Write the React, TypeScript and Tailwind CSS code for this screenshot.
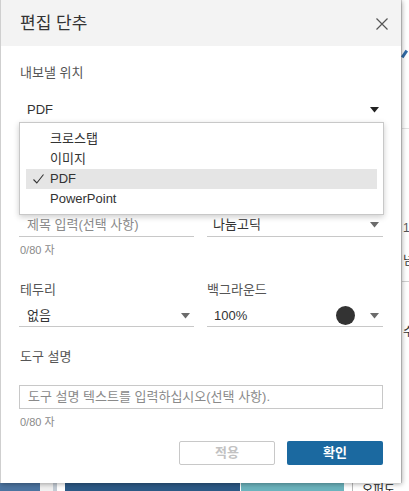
import { FC } from 'react'

const font = { fontFamily: '"Liberation Sans", "Noto Sans CJK KR", sans-serif' }

const Caret: FC<{ dark?: boolean }> = ({ dark }) => (
  <svg width="9" height="6" viewBox="0 0 9 6" className="shrink-0">
    <path d="M0 0 H9 L4.5 5.5 Z" fill={dark ? '#222' : '#6b6b6b'} />
  </svg>
)

const Counter = () => (
  <div className="h-[14px] pl-px text-[11px] leading-[14px] text-[#8a8a8a]">0/80 자</div>
)

const App: FC = () => {
  return (
    <div className="relative h-[491px] w-[409px] overflow-hidden bg-white text-[#333]" style={font}>
      {/* page behind the dialog */}
      <div className="flex h-full w-full flex-col">
        <div className="flex flex-1">
          <div className="flex-1" />
          <div className="relative w-[8px] border-l border-[#d6d6d6] bg-white text-[12px]">
            <div className="mt-[50px] ml-[1px] h-[8px] w-[3px] rotate-[35deg] bg-[#2f6aa6]" />
            <div className="mt-[70px] h-px w-full bg-[#e2e2e2]" />
            <div className="mt-[92px] pl-[1px] leading-[14px] text-[#555]">1</div>
            <div className="mt-[18px] pl-[1px] leading-[16px]">넘</div>
            <div className="mt-[12px] h-px w-full bg-[#d0d0d0]" />
            <div className="mt-[42px] pl-[1px] leading-[16px] text-[#333]">수</div>
          </div>
        </div>
        <div className="flex h-[8px] items-stretch bg-white">
          <div className="w-[40px] bg-[#4c74a0]" />
          <div className="w-[13px] bg-[#f0f0f0]" />
          <div className="w-[4px] bg-[#c3cbd4]" />
          <div className="w-[8px]" />
          <div className="w-[175px] bg-[#2c5985]" />
          <div className="w-px" />
          <div className="w-[103px] bg-[#6bb3bd]" />
          <div className="w-[8px]" />
          <div className="w-px bg-[#b8b8b8]" />
          <div className="pl-[9px] text-[12px] leading-[14px] text-[#222]">오퍼도</div>
        </div>
      </div>

      {/* dialog */}
      <div className="absolute left-0 top-0 h-[483px] w-[401px] border-l border-[#cfcfcf] bg-white shadow-[1px_1px_5px_rgba(0,0,0,0.35)]">
        <div className="flex h-[46px] items-center justify-between bg-[#f3f3f3] pl-[19px] pr-[13px] pt-[2px]">
          <span className="text-[17px] leading-[20px] text-[#333]">편집 단추</span>
          <svg width="12" height="12" viewBox="0 0 12 12">
            <path d="M0.5 0.5 L11.5 11.5 M11.5 0.5 L0.5 11.5" stroke="#555" strokeWidth="1.2" />
          </svg>
        </div>

        <div className="flex flex-col px-[18px] pt-[18px] text-[13px]">
          <div className="h-[18px] pl-px leading-[18px] text-[#555]">내보낼 위치</div>

          <div className="mt-[15px] flex h-[26px] items-center justify-between border-b border-[#c8c8c8] pl-[8px] pr-[4px]">
            <span className="leading-[18px] text-[#333]">PDF</span>
            <Caret dark />
          </div>

          <div className="mt-[90px] grid grid-cols-[175px_176px] gap-x-[13px]">
            <div className="flex h-[24px] items-center border-b border-[#c8c8c8] pl-[8px]">
              <span className="text-[#8a8a8a]">제목 입력(선택 사항)</span>
            </div>
            <div className="flex h-[24px] items-center justify-between border-b border-[#c8c8c8] pl-[6px] pr-[4px]">
              <span className="text-[#333]">나눔고딕</span>
              <Caret />
            </div>
          </div>

          <div className="mt-[6px]">
            <Counter />
          </div>

          <div className="mt-[24px] grid grid-cols-[175px_176px] gap-x-[13px]">
            <div className="h-[18px] pl-px leading-[18px] text-[#555]">테두리</div>
            <div className="h-[18px] leading-[18px] text-[#555]">백그라운드</div>
            <div className="mt-[6px] flex h-[22px] items-center justify-between border-b border-[#c8c8c8] pl-[8px] pr-[4px]">
              <span className="text-[#333]">없음</span>
              <Caret />
            </div>
            <div className="mt-[6px] flex h-[22px] items-center border-b border-[#c8c8c8] pl-[7px] pr-[4px]">
              <span className="flex-1 text-[#333]">100%</span>
              <span className="mr-[15px] h-[19px] w-[19px] rounded-full bg-[#333]" />
              <Caret />
            </div>
          </div>

          <div className="mt-[21px] h-[18px] pl-px leading-[18px] text-[#555]">도구 설명</div>

          <div className="mt-[19px] flex h-[24px] items-center border border-[#c8c8c8] pl-[8px]">
            <span className="text-[#8a8a8a]">도구 설명 텍스트를 입력하십시오(선택 사항).</span>
          </div>

          <div className="mt-[6px]">
            <Counter />
          </div>

          <div className="mt-[12px] flex justify-end gap-[12px]">
            <button className="h-[24px] w-[96px] rounded-[2px] border border-[#c8c8c8] bg-white font-bold text-[#c2c2c2]">
              적용
            </button>
            <button className="h-[24px] w-[96px] rounded-[2px] bg-[#1b69a0] font-bold text-white">
              확인
            </button>
          </div>
        </div>

        {/* open dropdown */}
        <div className="absolute left-[18px] top-[122px] h-[93px] w-[365px] border border-[#c8c8c8] bg-white px-[6px] pt-[6px] shadow-[0_2px_6px_rgba(0,0,0,0.2)]">
          {['크로스탭', '이미지', 'PDF', 'PowerPoint'].map((item) => (
            <div
              key={item}
              className={`flex h-[20px] items-center text-[13px] ${item === 'PDF' ? 'bg-[#e5e5e5]' : ''}`}
            >
              <span className="flex w-[24px] justify-center">
                {item === 'PDF' && (
                  <svg width="11" height="10" viewBox="0 0 11 10">
                    <path d="M0.5 5.5 L3.8 9 L10.5 0.5" fill="none" stroke="#333" strokeWidth="1.1" />
                  </svg>
                )}
              </span>
              <span className="text-[#333]">{item}</span>
            </div>
          ))}
        </div>
      </div>
    </div>
  )
}

export default App
